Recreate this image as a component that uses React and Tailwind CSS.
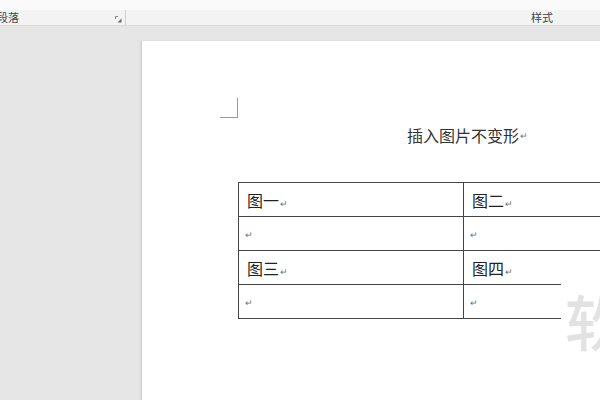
import React from 'react';

const cjk = { fontFamily: '"Noto Sans CJK SC", "Liberation Sans", sans-serif' };

const Mark = () => (
  <span className="text-[9px] text-gray-500 ml-px align-baseline">↵</span>
);

const Cell = ({ label, w, right = true }) => (
  <div
    className={`h-[34px] shrink-0 flex items-center pl-[8px] border-b border-[#444] ${right ? 'border-r' : ''} ${w}`}
  >
    {label ? (
      <span className="text-[16px] text-[#222] leading-none">
        {label}
        <Mark />
      </span>
    ) : (
      <span className="text-[9px] text-gray-500 -ml-[2px] mt-[2px]">↵</span>
    )}
  </div>
);

export default function App() {
  return (
    <div className="w-[600px] h-[400px] overflow-hidden bg-[#e6e6e6] flex flex-col relative" style={cjk}>
      {/* ribbon group labels */}
      <div className="h-[10px] bg-[#fafafa] shrink-0" />
      <div className="h-[16px] bg-[#f3f3f3] border-b border-[#dadada] flex items-center text-[11px] text-[#444] shrink-0">
        <div className="w-[126px] h-full flex items-center justify-between pr-[3px] border-r border-[#d0d0d0]">
          <span className="-ml-[3px]">段落</span>
          <svg width="7" height="7" viewBox="0 0 7 7" className="mt-[3px]">
            <path d="M0.5 0.5 H3 M0.5 0.5 V3" stroke="#888" fill="none" />
            <path d="M2.5 6.5 L6.5 2.5 V6.5 Z" fill="#666" />
          </svg>
        </div>
        <div className="flex-1 flex justify-end pr-[47px]">
          <span>样式</span>
        </div>
      </div>

      {/* document area */}
      <div className="flex-1 flex pt-[15px] min-h-0">
        <div className="w-[141px] shrink-0" />
        <div className="flex-1 bg-white border-l border-[#cfcfcf] shadow-[-1px_0_2px_rgba(0,0,0,0.06)] pt-[57px] pl-[78px] flex flex-col">
          {/* corner mark */}
          <div className="w-[18px] h-[20px] border-r border-b border-[#9a9a9a]" />

          <div className="pl-[187px] mt-[8px] h-[18px] flex items-center text-[16px] text-[#333] leading-none whitespace-nowrap">
            插入图片不变形<Mark />
          </div>

          {/* table */}
          <div className="mt-[38px] ml-[18px] flex flex-col border-l border-[#444] w-[400px]">
            <div className="flex border-t border-[#444]">
              <Cell label="图一" w="w-[225px]" />
              <Cell label="图二" w="w-[200px]" right={false} />
            </div>
            <div className="flex">
              <Cell w="w-[225px]" />
              <Cell w="w-[200px]" right={false} />
            </div>
            <div className="flex">
              <Cell label="图三" w="w-[225px]" />
              <Cell label="图四" w="w-[97px]" right={false} />
            </div>
            <div className="flex">
              <Cell w="w-[225px]" />
              <Cell w="w-[97px]" right={false} />
            </div>
          </div>
        </div>
      </div>

      {/* watermark */}
      <div className="absolute left-[565px] top-[290px] text-[60px] font-medium text-[#e2e2e2] leading-none whitespace-nowrap select-none">
        软件
      </div>
    </div>
  );
}
